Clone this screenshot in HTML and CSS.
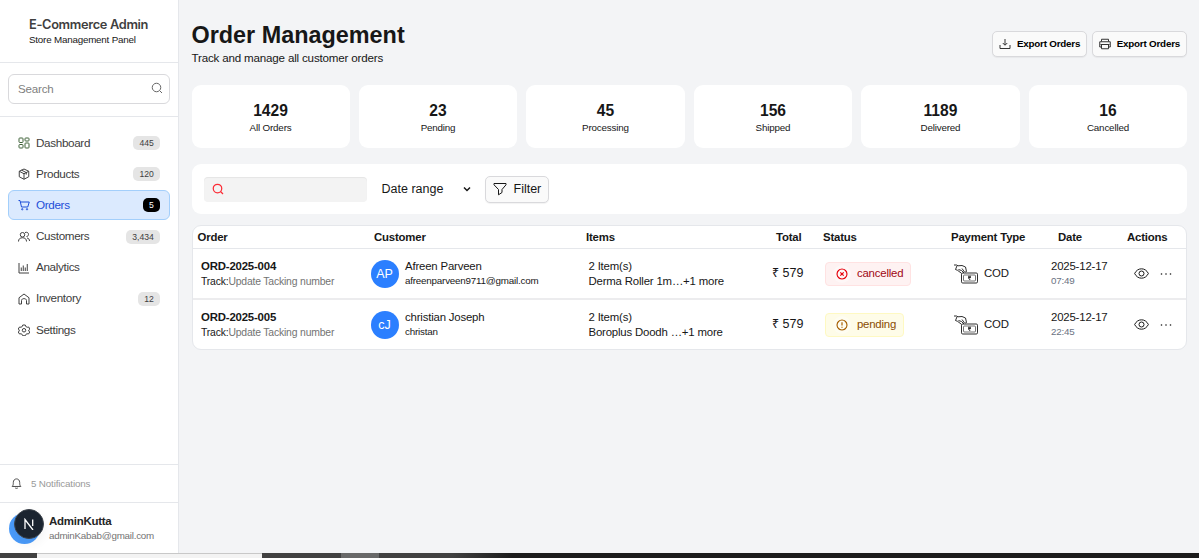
FILE: index.html
```html
<!DOCTYPE html>
<html>

	<head>
		<meta charset="UTF-8">
		<title>Order Management</title>
		<link rel="stylesheet" href="styles.css">
	</head>

	<body>
		<!-- shared icons -->
		<svg class="defs">
			<symbol id="search" viewBox="0 0 24 24"><circle cx="11" cy="11" r="8.5"/><path d="M17.5 17.5 22 22"/></symbol>
			<symbol id="cash" viewBox="0 0 24 20">
				<path d="M0 1h2.500l1.500.8 4-.3 3.500 1.500 1 4.500-1.300.5M3 1.800 1.500 5.500l2 .8 4 3M4.500 5.500l3 1 2.500 2.500M8 4.500l2.500 3.500"/>
				<rect x="7.500" y="9" width="16" height="10" rx="1.200"/>
				<rect class="thin" x="9.500" y="11" width="12" height="6" rx="1"/>
				<path d="M14 12.300h3M14 13.600h3M16 13.500l-1.300.8 1.500 1.700"/>
			</symbol>
			<symbol id="eye" viewBox="0 0 24 24"><path d="M1 12C3.500 7 7.500 4.500 12 4.500s8.500 2.500 11 7.500c-2.500 5-6.500 7.500-11 7.500S3.500 17 1 12z"/><circle cx="12" cy="12" r="4"/></symbol>
			<symbol id="dots" viewBox="0 0 12 4"><circle cx="1.500" cy="2" r=".8"/><circle cx="6" cy="2" r=".8"/><circle cx="10.500" cy="2" r=".8"/></symbol>
		</svg>
		<div id="wrap">
			<div class="side">
				<div class="brand">
					<h2>E-Commerce Admin</h2>
					<p>Store Management Panel</p>
				</div>
				<div class="find">
					<div class="box"><span>Search</span><svg class="ico"><use href="#search"/></svg></div>
				</div>
				<ul class="nav">
					<li>
						<svg class="ico green" viewBox="0 0 24 24"><rect x="2" y="2" width="8" height="9" rx="1.500"/><rect x="14" y="2" width="8" height="6" rx="1.500"/><rect x="2" y="15" width="8" height="7" rx="1.500"/><rect x="14" y="12" width="8" height="10" rx="1.500"/></svg>
						<span>Dashboard</span><b>445</b>
					</li>
					<li>
						<svg class="ico" viewBox="0 0 24 24"><path d="M12 2 21.500 6.500v11L12 22.500 2.500 17.500v-11zM2.500 6.500 12 11.500l9.500-5M12 11.500v11M7 4.200l9.500 5v4"/></svg>
						<span>Products</span><b>120</b>
					</li>
					<li class="on">
						<svg class="ico" viewBox="0 0 24 24"><path d="M1 3h3l3 13h12.500L22.500 6H5"/><circle cx="8.500" cy="20.500" r="1.300"/><circle cx="18" cy="20.500" r="1.300"/></svg>
						<span>Orders</span><b>5</b>
					</li>
					<li>
						<svg class="ico" viewBox="0 0 24 24"><circle cx="9" cy="7.500" r="4.500"/><path d="M1 21c0-5 3-7.500 8-7.500s8 2.500 8 7.500M14 3c5-1.500 7 1 7 4 0 2-1.500 4-4 4M18 14c3.500.500 5 3 5 6"/></svg>
						<span>Customers</span><b>3,434</b>
					</li>
					<li>
						<svg class="ico" viewBox="0 0 24 24"><path d="M2 2v20h20M6.500 18v-7M10.500 18V7M14.500 18v-7M18.500 18V4"/></svg>
						<span>Analytics</span>
					</li>
					<li>
						<svg class="ico" viewBox="0 0 24 24"><path d="M2 22V9.500L12 2l10 7.500V22M2 22h5v-7c0-5 10-5 10 0v7h5"/></svg>
						<span>Inventory</span><b>12</b>
					</li>
					<li>
						<svg class="ico" viewBox="0 0 24 24"><path d="M9.500 2h5l1 3 3 1.500 3-.5 2 4.500-2 1.500v2l2 2-2.500 4-3-.5-2.500 1.500-1 2.500h-5l-1-2.500L6 19.500l-3 .5L.500 16l2-2v-2l-2-2L3 6l3 .5L8.500 5z"/><circle cx="12" cy="12.500" r="3.500"/></svg>
						<span>Settings</span>
					</li>
				</ul>
				<div class="bell">
					<svg class="ico" viewBox="0 0 24 24"><path d="M2.500 18.500C5 16 5 13.500 5 10c0-5 3-8 7-8s7 3 7 8c0 3.500 0 6 2.500 8.500zM9 21.500c1.500 1.500 4.500 1.500 6 0"/></svg>
					<span>5 Notifications</span>
				</div>
				<div class="user">
					<div class="face">
						<div class="badge"><svg viewBox="0 0 12 12"><path d="M2 11V1.500L10 12M9.700 1.500V8"/></svg></div>
					</div>
					<div class="name">
						<h3>AdminKutta</h3>
						<p>adminKabab@gmail.com</p>
					</div>
				</div>
			</div>

			<div class="main">
				<div class="head">
					<div>
						<h1>Order Management</h1>
						<p>Track and manage all customer orders</p>
					</div>
					<div class="btns">
						<button>
							<svg class="ico" viewBox="0 0 24 24"><path d="M2 14v7h20v-7M12 2v12M7.500 10l4.500 4.500 4.500-4.500"/></svg>
							Export Orders
						</button>
						<button>
							<svg class="ico" viewBox="0 0 24 24"><path d="M5 7V2.500h14V7M5 18H1.500V7.500h21V18H19M5 13h14v8.500H5zM3 13h18"/></svg>
							Export Orders
						</button>
					</div>
				</div>

				<div class="cards">
					<div><b>1429</b><span>All Orders</span></div>
					<div><b>23</b><span>Pending</span></div>
					<div><b>45</b><span>Processing</span></div>
					<div><b>156</b><span>Shipped</span></div>
					<div><b>1189</b><span>Delivered</span></div>
					<div><b>16</b><span>Cancelled</span></div>
				</div>

				<div class="bar">
					<div class="input"><svg class="ico"><use href="#search"/></svg></div>
					<div class="range">Date range <svg viewBox="0 0 8 6"><path d="M1 1.500 4 4.500 7 1.500"/></svg></div>
					<button class="filter">
						<svg viewBox="0 0 14 14"><path d="M1 1.500h12v1.300L9 7.500v3l-3.500 2.300V7.500L1 2.800z"/></svg>
						Filter
					</button>
				</div>

				<table>
					<thead>
						<tr>
							<th class="c1">Order</th>
							<th class="c2">Customer</th>
							<th class="c3">Items</th>
							<th class="c4">Total</th>
							<th class="c5">Status</th>
							<th class="c6">Payment Type</th>
							<th class="c7">Date</th>
							<th class="c8">Actions</th>
						</tr>
					</thead>
					<tbody>
						<tr>
							<td class="c1"><b>ORD-2025-004</b><p>Track:<i>Update Tacking number</i></p></td>
							<td class="c2"><div class="who"><em>AP</em><div>Afreen Parveen<small>afreenparveen9711@gmail.com</small></div></div></td>
							<td class="c3">2 Item(s)<p>Derma Roller 1m…+1 more</p></td>
							<td class="c4">₹ 579</td>
							<td class="c5"><div class="tag red"><svg viewBox="0 0 12 12"><circle cx="6" cy="6" r="5"/><path d="m4.300 4.300 3.400 3.400M7.700 4.300 4.300 7.700"/></svg>cancelled</div></td>
							<td class="c6"><div class="pay"><svg><use href="#cash"/></svg>COD</div></td>
							<td class="c7">2025-12-17<small>07:49</small></td>
							<td class="c8"><div class="act"><svg class="eye"><use href="#eye"/></svg><svg class="dots"><use href="#dots"/></svg></div></td>
						</tr>
						<tr>
							<td class="c1"><b>ORD-2025-005</b><p>Track:<i>Update Tacking number</i></p></td>
							<td class="c2"><div class="who"><em>cJ</em><div>christian Joseph<small>christan</small></div></div></td>
							<td class="c3">2 Item(s)<p>Boroplus Doodh …+1 more</p></td>
							<td class="c4">₹ 579</td>
							<td class="c5"><div class="tag yellow"><svg viewBox="0 0 12 12"><circle cx="6" cy="6" r="5"/><path d="M6 3.200v3.400M6 7.800v1"/></svg>pending</div></td>
							<td class="c6"><div class="pay"><svg><use href="#cash"/></svg>COD</div></td>
							<td class="c7">2025-12-17<small>22:45</small></td>
							<td class="c8"><div class="act"><svg class="eye"><use href="#eye"/></svg><svg class="dots"><use href="#dots"/></svg></div></td>
						</tr>
					</tbody>
				</table>
			</div>
		</div>
		<div class="dock"><div class="tip"></div><div class="task"></div></div>
	</body>

</html>
```

FILE: styles.css
```css
* {
	box-sizing: border-box;
}

body,
h1,
h2,
h3,
p,
ul {
	margin: 0;
	padding: 0;
}

body {
	height: 558px;
	overflow: hidden;
	background: #f3f4f6;
	color: #171717;
	font: 11px/15px "Liberation Sans", Arial, sans-serif;
}

li {
	list-style: none;
}

i,
em {
	font-style: normal;
}

svg {
	fill: none;
	stroke: currentColor;
	flex: none;
}

.defs {
	display: none;
}

.ico {
	width: 12px;
	height: 12px;
	stroke-width: 2;
}

#wrap {
	display: flex;
	height: 553px;
}

/* sidebar */
.side {
	width: 179.4px;
	height: 553px;
	background: #fff;
	border-right: 1px solid #e5e7eb;
	display: flex;
	flex-direction: column;
}

.brand {
	height: 63px;
	padding: 16px 0 0 29px;
	border-bottom: 1px solid #e5e7eb;
}

.brand h2 {
	font: 600 12.8px/17px Inter, sans-serif;
	letter-spacing: -.33px;
	color: #404040;
}

.brand p {
	font-size: 9.8px;
	letter-spacing: -.2px;
	line-height: 14px;
}

.find {
	height: 54px;
	padding: 11px 8.4px 0 8px;
	border-bottom: 1px solid #e5e7eb;
}

.find .box {
	height: 30px;
	padding: 0 6px 0 9px;
	border: 1px solid #d9d9dc;
	border-radius: 6px;
	display: flex;
	align-items: center;
	justify-content: space-between;
	color: #808080;
	font-size: 11.6px;
	letter-spacing: -.2px;
}

.find .box span {
	margin-top: -1px;
}

.find .ico {
	color: #666;
	stroke-width: 2;
	margin-top: -2px;
}

.nav {
	flex: 1;
	padding: 11px 8.4px 0 8px;
}

.nav li {
	height: 30px;
	margin-bottom: 1.2px;
	padding: 0 9px;
	border: 1px solid transparent;
	border-radius: 6px;
	display: flex;
	align-items: center;
	color: #404040;
}

.nav .ico {
	margin-right: 6px;
}

.nav .green {
	color: #3f6238;
}

.nav span {
	flex: 1;
	margin-top: -2px;
	font-size: 11.7px;
	letter-spacing: -.35px;
}

.nav b {
	height: 14px;
	padding: 0 6px;
	border-radius: 5px;
	background: #e5e5e5;
	font: 8.6px/14px "Liberation Sans", Arial, sans-serif;
}

.nav .on {
	background: #dbeafe;
	border-color: #a3cffb;
	color: #1d4ed8;
}

.nav .on b {
	background: #000;
	color: #fff;
}

.bell {
	height: 38px;
	padding-left: 11px;
	border-top: 1px solid #e5e7eb;
	display: flex;
	align-items: center;
	font-size: 9.8px;
	letter-spacing: -.15px;
	color: #999;
}

.bell .ico {
	width: 11px;
	height: 11px;
	margin-right: 9px;
	color: #404040;
}

.user {
	height: 51px;
	padding: 1px 0 0 9px;
	border-top: 1px solid #e5e7eb;
	display: flex;
	align-items: center;
}

.face {
	width: 31px;
	height: 31px;
	margin-right: 9px;
	border-radius: 50%;
	background: #4a9bfa;
	position: relative;
}

.badge {
	width: 30px;
	height: 30px;
	border: 1px solid #3c434b;
	border-radius: 50%;
	background: #1b2430;
	box-shadow: 0 4px 12px rgba(0, 0, 0, .06);
	position: absolute;
	left: 5px;
	top: -4px;
	color: #fff;
	display: flex;
	align-items: center;
	justify-content: center;
}

.badge svg {
	width: 12px;
	height: 12px;
	stroke-width: 1.3;
}

.name {
	margin-top: -2px;
}

.user h3 {
	font-size: 11.5px;
	letter-spacing: -.27px;
	line-height: 15px;
	color: #262626;
}

.user p {
	font-size: 9.8px;
	letter-spacing: -.23px;
	line-height: 13px;
	color: #737373;
}

/* content */
.main {
	flex: 1;
	padding: 20px 12px 0 12.3px;
}

.head {
	height: 65px;
	display: flex;
	justify-content: space-between;
}

.head h1 {
	font-size: 23.4px;
	line-height: 30px;
}

.head p {
	font-size: 11.6px;
	letter-spacing: -.18px;
	line-height: 16px;
}

.btns {
	display: flex;
	gap: 5px;
	padding-top: 11px;
}

button {
	height: 26px;
	padding: 0 6px;
	border: 1px solid #d9d9dc;
	border-radius: 5px;
	background: #fafafa;
	box-shadow: 0 1px 1px rgba(0, 0, 0, .05);
	display: flex;
	align-items: center;
	font: bold 9.8px/14px "Liberation Sans", Arial, sans-serif;
	letter-spacing: -.2px;
	color: #000;
}

button .ico {
	margin-right: 5.5px;
	color: #333;
}

.cards {
	display: grid;
	grid-template-columns: repeat(6, 1fr);
	gap: 9.4px;
}

.cards div {
	height: 63px;
	padding-top: 16px;
	border-radius: 9px;
	background: #fff;
	text-align: center;
}

.cards b {
	display: block;
	font-size: 15.6px;
	line-height: 20px;
}

.cards span {
	display: block;
	font-size: 9.8px;
	letter-spacing: -.17px;
	line-height: 14px;
}

.bar {
	height: 50px;
	margin-top: 16px;
	padding: 0 12.5px;
	border-radius: 9px;
	background: #fff;
	display: flex;
	align-items: center;
	font-size: 12.5px;
}

.input {
	width: 162.5px;
	height: 25px;
	padding: 6px 8px;
	border-radius: 4px;
	background: #f3f3f3;
	box-shadow: inset 0 1px 1px rgba(0, 0, 0, .06);
	color: #fb2c36;
}

.input .ico {
	display: block;
	stroke-width: 2.5;
}

.range {
	width: 118.5px;
	padding: 0 15px;
	display: flex;
	align-items: center;
	justify-content: space-between;
	white-space: nowrap;
}

.range svg {
	width: 8px;
	height: 6px;
	margin-right: -1px;
	stroke-width: 1.5;
}

.filter {
	height: 27px;
	padding: 0 7px;
	font-size: 12.5px;
	font-weight: normal;
	letter-spacing: 0;
	color: #171717;
}

.filter svg {
	width: 14px;
	height: 14px;
	margin-right: 6.5px;
}

/* orders */
table {
	width: 995.5px;
	margin-top: 11px;
	table-layout: fixed;
	border: 1px solid #e5e7eb;
	border-radius: 9px;
	border-spacing: 0;
	background: #fff;
	font-size: 11.4px;
	letter-spacing: -.18px;
}

th,
td {
	padding: 0 0 0 9.5px;
	text-align: left;
	white-space: nowrap;
}

th {
	height: 23px;
	padding: 0 0 0 6.5px;
	border-bottom: 1px solid #e5e7eb;
}

td {
	height: 49px;
}

tr + tr td {
	height: 51px;
	border-top: 2px solid #ececee;
}

.c1 { width: 175px; }
.c2 { width: 212px; }
.c3 { width: 183px; }
.c4 { width: 54px; }
.c5 { width: 128px; }
.c6 { width: 97px; }
.c7 { width: 79px; }

th.c1 { padding-left: 5px; }
th.c4 { padding-left: 13.5px; }
th.c7 { padding-left: 16.5px; }
td.c1 { padding-left: 8.5px; }
td.c2 { padding-left: 3px; }
td.c3 { padding-left: 9px; }
td.c5 { padding-left: 8.4px; }
td.c8 { padding-left: 13px; }

td.c1 p {
	font-size: 10.4px;
	letter-spacing: -.18px;
}

td i {
	color: #737373;
}

small {
	display: block;
	font-size: 9.8px;
	letter-spacing: -.2px;
	line-height: 14px;
}

.who {
	display: flex;
	align-items: center;
}

.who em {
	width: 28px;
	height: 28px;
	margin-right: 6.5px;
	border-radius: 50%;
	background: #2b7fff;
	color: #fff;
	font-size: 12.5px;
	letter-spacing: 0;
	line-height: 28px;
	text-align: center;
}

td.c4 {
	font-size: 12.5px;
	letter-spacing: 0;
}

.tag {
	display: inline-flex;
	align-items: center;
	height: 24px;
	padding: 0 7px 0 10px;
	border: 1px solid;
	border-radius: 4px;
}

.tag svg {
	width: 12px;
	height: 12px;
	margin-right: 9px;
	border-radius: 50%;
	background: rgba(255, 255, 255, .4);
	box-shadow: 0 0 0 3px rgba(255, 255, 255, .4);
	stroke-width: 1.2;
}

.red {
	background: #fef2f2;
	border-color: #ffe2e2;
	color: #9f0712;
}

.red svg {
	color: #e7000b;
}

.yellow {
	background: #fefce8;
	border-color: #fef9c2;
	color: #894b00;
}

.yellow svg {
	color: #a65f00;
}

.pay,
.act {
	display: flex;
	align-items: center;
}

.pay svg {
	width: 24px;
	height: 20px;
	margin-right: 6px;
	stroke-width: .9;
}

.thin {
	stroke-width: .6;
}

.c7 small {
	color: #6a7282;
}

.eye {
	width: 15px;
	height: 15px;
	stroke-width: 1.6;
}

.dots {
	width: 12px;
	height: 4px;
	margin-left: 11px;
	fill: currentColor;
	stroke: none;
}

/* strip under the page */
.dock {
	height: 5px;
	display: flex;
	background: #414141;
}

.tip {
	width: 225px;
	margin-left: 37px;
	border-top: 1px solid #c8c8c8;
	background: #f3f3f3;
}

.task {
	flex: 1;
	background: linear-gradient(90deg, #414141 79px, #686868 79px, #686868 117px, #414141 117px, #414141 190px, #1c1c1c 250px, #1c1c1c);
}
```
